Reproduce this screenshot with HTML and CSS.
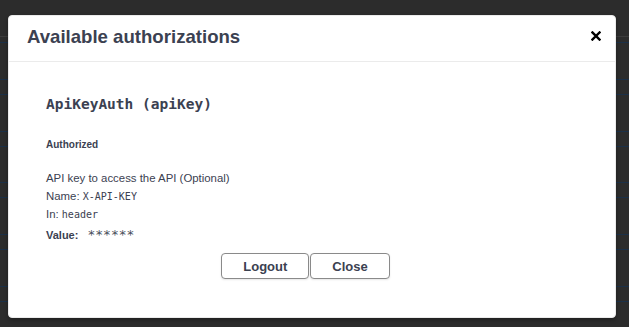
FILE: index.html
```html
<!DOCTYPE html>
<html>
<head>
<meta charset="utf-8">
<link rel="stylesheet" href="styles.css">
</head>
<body>
<div class="page">
  <div class="topbar"></div>
  <div class="section-head"></div>
  <div class="op"><div class="op-summary"></div></div>
  <div class="op"><div class="op-summary"></div></div>
  <div class="op"><div class="op-summary"></div></div>
  <div class="op"><div class="op-summary"></div></div>
  <div class="op"><div class="op-summary"></div></div>
</div>
<div class="modal">
  <div class="modal-header">
    <h3 class="modal-title">Available authorizations</h3>
    <button class="close-modal" aria-label="Close">
      <svg width="10" height="10" viewBox="0 0 10 10"><path d="M1.4 1.4 L8.6 8.6 M8.6 1.4 L1.4 8.6" stroke="#000" stroke-width="2.3" stroke-linecap="square"/></svg>
    </button>
  </div>
  <div class="modal-content">
    <div class="auth-container">
      <h4 class="auth-name">ApiKeyAuth&nbsp;(apiKey)</h4>
      <h6 class="auth-status">Authorized</h6>
      <p class="desc">API key to access the API (Optional)</p>
      <p class="row">Name: <code>X-API-KEY</code></p>
      <p class="row row-tight">In: <code>header</code></p>
      <p class="value-row"><label class="value-label">Value:</label><code class="masked">******</code></p>
      <div class="btn-wrapper">
        <button class="btn">Logout</button><button class="btn">Close</button>
      </div>
    </div>
  </div>
</div>
</body>
</html>
```
FILE: styles.css
```css
html, body {
  margin: 0;
  padding: 0;
}
body {
  background: #2c2c2c;
  height: 327px;
  overflow: hidden;
  position: relative;
  font-family: "Liberation Sans", Arial, sans-serif;
  color: #3b4151;
}
.page {
  display: flex;
  flex-direction: column;
}
.topbar {
  height: 36px;
  border-bottom: 1px solid #3c3c3c;
}
.section-head {
  margin-top: 5px;
  border-top: 1px solid #1b3048;
  height: 36px;
}
.op {
  border-top: 1px solid #1b3048;
  height: 50.7px;
}
.op-summary {
  height: 14px;
  border-bottom: 1px solid #1b3048;
}
.modal {
  position: absolute;
  left: 8px;
  top: 15px;
  width: 606px;
  background: #fff;
  border: 1px solid #ebebeb;
  border-radius: 4px;
  box-shadow: 0 2px 4px rgba(0,0,0,.3);
}
.modal-header {
  display: flex;
  align-items: center;
  padding: 10px 0 13px;
  border-bottom: 1px solid #ebebeb;
}
.modal-title {
  flex: 1;
  margin: 0;
  padding: 0 18px;
  font-size: 18.6px;
  line-height: 22px;
  font-weight: 700;
  color: #3b4151;
}
.close-modal {
  border: none;
  background: none;
  padding: 0 14px 3px;
  display: flex;
  align-items: center;
}
.modal-content {
  padding: 20px 20px 0;
}
.auth-container {
  padding: 10px 18px 38px 17px;
}
.auth-name {
  margin: 2px 0 0;
  font-family: "DejaVu Sans Mono", monospace;
  font-size: 14.5px;
  line-height: 20px;
  font-weight: 700;
  color: #3b4151;
}
.auth-status {
  margin: 24px 0 0;
  font-size: 10px;
  line-height: 14px;
  font-weight: 700;
  color: #3b4151;
}
.desc {
  margin: 18px 0 0;
  font-size: 11.4px;
  line-height: 16px;
}
.row {
  margin: 2px 0 0;
  font-size: 11.4px;
  line-height: 16px;
}
.row-tight {
  margin-top: 1px;
}
code {
  font-family: "DejaVu Sans Mono", monospace;
  font-size: 10px;
}
.value-row {
  margin: 4px 0 0;
  display: flex;
  align-items: center;
  gap: 9px;
  font-size: 11px;
  line-height: 16px;
}
.value-label {
  font-weight: 700;
}
.masked {
  font-size: 13px;
  color: #4a4f5c;
}
.btn-wrapper {
  display: flex;
  justify-content: center;
  margin-top: 10px;
  padding-right: 12px;
}
.btn {
  font-family: "Liberation Sans", Arial, sans-serif;
  font-size: 13px;
  font-weight: 700;
  color: #3b4151;
  background: #fff;
  border: 1px solid #8a8a8a;
  border-radius: 4px;
  box-shadow: 0 1px 2px rgba(0,0,0,.1);
  height: 26px;
  padding: 0 21px;
  margin: 0;
}
.btn + .btn {
  margin-left: 1px;
}
```
